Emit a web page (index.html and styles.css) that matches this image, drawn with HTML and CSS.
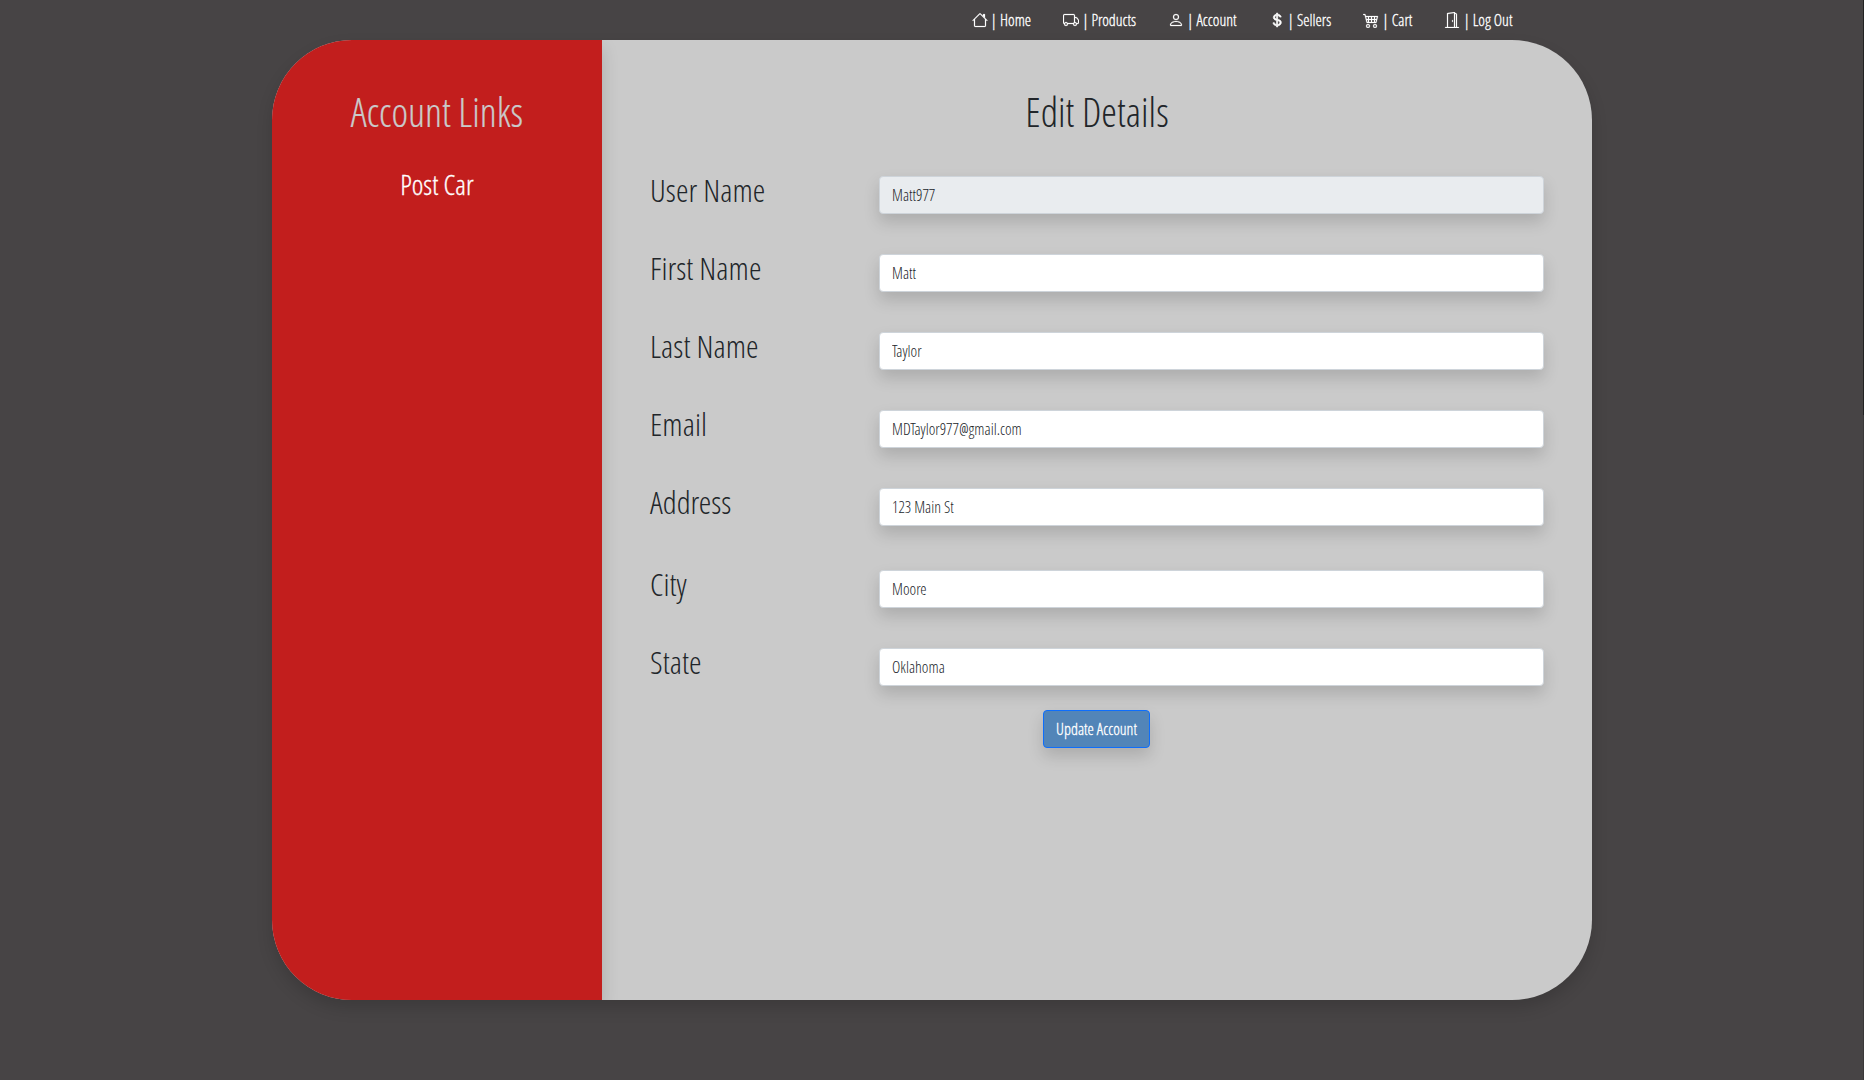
FILE: index.html
```html
<!DOCTYPE html>
<html lang="en">
<head>
<meta charset="utf-8">
<title>Edit Details</title>
<link rel="stylesheet" href="styles.css">
</head>
<body>
<nav class="nav">
  <a class="nav-link"><svg class="icon" viewBox="0 0 16 16"><path d="M2 13.5V7h1v6.5a.5.5 0 0 0 .5.5h9a.5.5 0 0 0 .5-.5V7h1v6.5a1.5 1.5 0 0 1-1.5 1.5h-9A1.5 1.5 0 0 1 2 13.5zm11-11V6l-2-2V2.5a.5.5 0 0 1 .5-.5h1a.5.5 0 0 1 .5.5z"/><path d="M7.293 1.5a1 1 0 0 1 1.414 0l6.647 6.646a.5.5 0 0 1-.708.708L8 2.207 1.354 8.854a.5.5 0 1 1-.708-.708L7.293 1.5z"/></svg> | Home</a>
  <a class="nav-link"><svg class="icon" viewBox="0 0 16 16"><path d="M0 3.5A1.5 1.5 0 0 1 1.5 2h9A1.5 1.5 0 0 1 12 3.5V5h1.02a1.5 1.5 0 0 1 1.17.563l1.481 1.85a1.5 1.5 0 0 1 .329.938V10.5a1.5 1.5 0 0 1-1.5 1.5H14a2 2 0 1 1-4 0H5a2 2 0 1 1-3.998-.085A1.5 1.5 0 0 1 0 10.5v-7zm1.294 7.456A1.999 1.999 0 0 1 4.732 11h5.536a2.01 2.01 0 0 1 .732-.732V3.5a.5.5 0 0 0-.5-.5h-9a.5.5 0 0 0-.5.5v7a.5.5 0 0 0 .294.456zM12 10a2 2 0 0 1 1.732 1h.768a.5.5 0 0 0 .5-.5V8.35a.5.5 0 0 0-.11-.312l-1.48-1.85A.5.5 0 0 0 13.02 6H12v4zm-9 1a1 1 0 1 0 0 2 1 1 0 0 0 0-2zm9 0a1 1 0 1 0 0 2 1 1 0 0 0 0-2z"/></svg> | Products</a>
  <a class="nav-link"><svg class="icon" viewBox="0 0 16 16"><path d="M8 8a3 3 0 1 0 0-6 3 3 0 0 0 0 6zm2-3a2 2 0 1 1-4 0 2 2 0 0 1 4 0zm4 8c0 1-1 1-1 1H3s-1 0-1-1 1-4 6-4 6 3 6 4zm-1-.004c-.001-.246-.154-.986-.832-1.664C11.516 10.68 10.289 10 8 10c-2.29 0-3.516.68-4.168 1.332-.678.678-.83 1.418-.832 1.664h10z"/></svg> | Account</a>
  <a class="nav-link"><svg class="icon icon-bold" viewBox="0 0 16 16"><path d="M4 10.781c.148 1.667 1.513 2.85 3.591 3.003V15h1.043v-1.216c2.27-.179 3.678-1.438 3.678-3.3 0-1.59-.947-2.51-2.956-3.028l-.722-.187V3.467c1.122.11 1.879.714 2.07 1.616h1.47c-.166-1.6-1.54-2.748-3.54-2.875V1H7.591v1.233c-1.939.23-3.27 1.472-3.27 3.156 0 1.454.966 2.483 2.661 2.917l.61.162v4.031c-1.149-.17-1.94-.8-2.131-1.718H4zm3.391-3.836c-1.043-.263-1.6-.825-1.6-1.616 0-.944.704-1.641 1.8-1.828v3.495l-.2-.05zm1.591 1.872c1.287.323 1.852.859 1.852 1.769 0 1.097-.826 1.828-2.2 1.939V8.73l.348.086z"/></svg> | Sellers</a>
  <a class="nav-link"><svg class="icon" viewBox="0 0 16 16"><path d="M0 2.5A.5.5 0 0 1 .5 2H2a.5.5 0 0 1 .485.379L2.89 4H14.5a.5.5 0 0 1 .485.621l-1.5 6A.5.5 0 0 1 13 11H4a.5.5 0 0 1-.485-.379L1.61 3H.5a.5.5 0 0 1-.5-.5zM3.14 5l.5 2H5V5H3.14zM6 5v2h2V5H6zm3 0v2h2V5H9zm3 0v2h1.36l.5-2H12zm1.11 3H12v2h.61l.5-2zM11 8H9v2h2V8zM8 8H6v2h2V8zM5 8H3.89l.5 2H5V8zm0 5a1 1 0 1 0 0 2 1 1 0 0 0 0-2zm-2 1a2 2 0 1 1 4 0 2 2 0 0 1-4 0zm9-1a1 1 0 1 0 0 2 1 1 0 0 0 0-2zm-2 1a2 2 0 1 1 4 0 2 2 0 0 1-4 0z"/></svg> | Cart</a>
  <a class="nav-link"><svg class="icon" viewBox="0 0 16 16"><path d="M8.5 10c-.276 0-.5-.448-.5-1s.224-1 .5-1 .5.448.5 1-.224 1-.5 1z"/><path d="M10.828.122A.5.5 0 0 1 11 .5V1h.5A1.5 1.5 0 0 1 13 2.5V15h1.5a.5.5 0 0 1 0 1h-13a.5.5 0 0 1 0-1H3V1.5a.5.5 0 0 1 .43-.495l7-1a.5.5 0 0 1 .398.117zM11.5 2H11v13h1V2.5a.5.5 0 0 0-.5-.5zM4 1.934V15h6V1.077l-6 .857z"/></svg> | Log Out</a>
</nav>
<main class="card">
  <aside class="sidebar">
    <h1 class="title">Account Links</h1>
    <a class="side-link">Post Car</a>
  </aside>
  <section class="details">
    <h1 class="title">Edit Details</h1>
    <form class="form">
      <div class="row"><label class="label" for="user">User Name</label><input class="field" id="user" value="Matt977" disabled></div>
      <div class="row"><label class="label" for="first">First Name</label><input class="field" id="first" value="Matt"></div>
      <div class="row"><label class="label" for="last">Last Name</label><input class="field" id="last" value="Taylor"></div>
      <div class="row"><label class="label" for="email">Email</label><input class="field" id="email" value="MDTaylor977@gmail.com"></div>
      <div class="row row-address"><label class="label" for="address">Address</label><input class="field" id="address" value="123 Main St"></div>
      <div class="row"><label class="label" for="city">City</label><input class="field" id="city" value="Moore"></div>
      <div class="row"><label class="label" for="state">State</label><input class="field" id="state" value="Oklahoma"></div>
      <button class="button" type="button">Update Account</button>
    </form>
  </section>
</main>
<div class="edge"></div>
</body>
</html>
```
FILE: styles.css
```css
*, *::before, *::after { box-sizing: border-box; }

body {
  margin: 0;
  height: 1080px;
  overflow: hidden;
  background: #474445;
  color: #212529;
  font-family: "Open Sans Condensed Light", "Open Sans", sans-serif;
  font-weight: 300;
  font-size: 16px;
  line-height: 24px;
}

.nav {
  display: flex;
  justify-content: flex-end;
  gap: 32px;
  height: 40px;
  padding: 8px 351.6px 0 0;
}

.nav-link {
  color: #fff;
  white-space: pre;
  -webkit-text-stroke: .3px #fff;
}

.icon {
  width: 16px;
  height: 16px;
  fill: currentColor;
  stroke: currentColor;
  stroke-width: .2;
  vertical-align: -2px;
}

.icon-bold { stroke-width: .7; }

.card {
  display: flex;
  width: 1320px;
  height: 960px;
  margin: 0 auto;
  border-radius: 80px;
  overflow: hidden;
  background: #cacaca;
  box-shadow: 0 8px 16px rgba(0, 0, 0, .15);
}

.sidebar {
  width: 330px;
  padding-top: 48px;
  background: #c21e1d;
  text-align: center;
  box-shadow: 0 8px 16px rgba(0, 0, 0, .15);
}

.title {
  margin: 0;
  font-size: 40px;
  font-weight: 300;
  line-height: 48px;
  text-align: center;
}

.sidebar .title {
  color: #cacaca;
  -webkit-text-stroke: .2px #cacaca;
}

.side-link {
  display: block;
  margin-top: 31px;
  color: #fff;
  font-size: 28px;
  line-height: 34px;
  -webkit-text-stroke: .3px #fff;
}

.details {
  flex: 1;
  padding: 48px 48px 0;
}

.form {
  display: flex;
  flex-direction: column;
  margin-top: 40px;
}

.row {
  display: grid;
  grid-template-columns: 229px 1fr;
  height: 38px;
  margin-bottom: 40px;
}

.row-address { margin-bottom: 44px; }

.row:nth-last-of-type(1) { margin-bottom: 24px; }

.label {
  font-size: 32px;
  line-height: 38px;
  margin-top: -5px;
}

.field {
  width: 100%;
  height: 38px;
  padding: 6px 12px;
  border: 1px solid #ced4da;
  border-radius: 4px;
  background: #fff;
  color: #212529;
  font: inherit;
  box-shadow: 0 8px 16px rgba(0, 0, 0, .15);
}

.field:disabled { background: #e9ecef; }

.button {
  align-self: center;
  width: 107px;
  height: 38px;
  margin-right: 1px;
  padding: 0;
  border: 1px solid #0d6efd;
  border-radius: 4px;
  background: #5285b8;
  color: #fff;
  font: inherit;
  -webkit-text-stroke: .3px #fff;
  box-shadow: 0 8px 16px rgba(0, 0, 0, .15);
}

/* window border along the right side */
.edge {
  position: absolute;
  top: 0;
  right: 0;
  width: 1px;
  height: 1080px;
  background: linear-gradient(#222 415px, #3a3838 415px);
}
```
